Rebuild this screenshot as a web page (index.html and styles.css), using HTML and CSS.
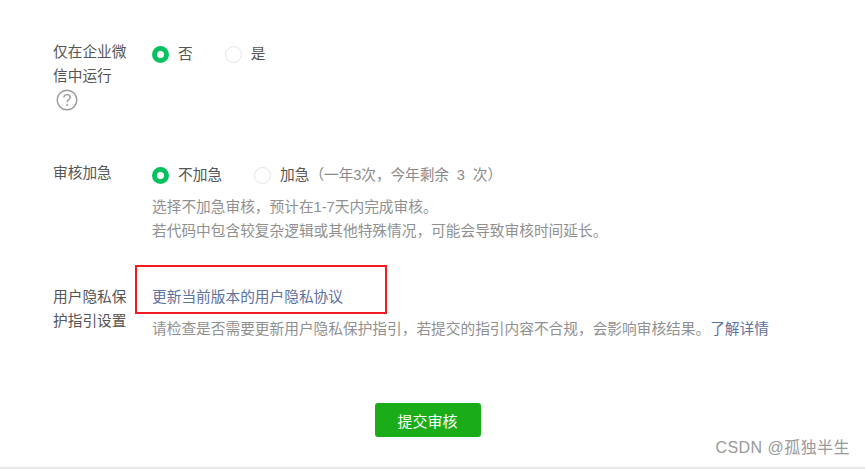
FILE: index.html
```html
<!DOCTYPE html>
<html lang="zh-CN">
<head>
    <meta charset="UTF-8">
    <meta name="viewport" content="width=device-width, initial-scale=1.0">
    <link rel="stylesheet" href="styles.css">
    <title>提交审核</title>
</head>
<body>
    <div class="page">
        <div class="form-row row-wecom">
            <div class="form-label">
                仅在企业微信中运行
                <svg class="help-icon" width="22" height="22" viewBox="0 0 22 22">
                    <circle cx="11" cy="11" r="9.8" fill="none" stroke="#9a9a9a" stroke-width="1.4"/>
                    <path d="M7.9 8.6c0-1.9 1.4-3 3.2-3s3.1 1.1 3.1 2.7c0 2.4-3.1 2.5-3.1 5" fill="none" stroke="#9a9a9a" stroke-width="1.4"/>
                    <circle cx="11.1" cy="16" r="0.95" fill="#9a9a9a"/>
                </svg>
            </div>
            <div class="form-value">
                <div class="radio-group">
                    <label class="radio radio-checked">否</label>
                    <label class="radio">是</label>
                </div>
            </div>
        </div>

        <div class="form-row row-speedup">
            <div class="form-label">审核加急</div>
            <div class="form-value">
                <div class="radio-group">
                    <label class="radio radio-checked">不加急</label>
                    <label class="radio">加急<span class="radio-note">（一年3次，今年剩余&nbsp;&nbsp;3&nbsp;&nbsp;次）</span></label>
                </div>
                <p class="form-tip tip-speedup">选择不加急审核，预计在1-7天内完成审核。<br>若代码中包含较复杂逻辑或其他特殊情况，可能会导致审核时间延长。</p>
            </div>
        </div>

        <div class="form-row row-privacy">
            <div class="form-label">用户隐私保护指引设置</div>
            <div class="form-value">
                <a class="link update-link" href="#">更新当前版本的用户隐私协议</a>
                <p class="form-tip">请检查是否需要更新用户隐私保护指引，若提交的指引内容不合规，会影响审核结果。<a class="link" href="#">了解详情</a></p>
            </div>
        </div>

        <div class="actions">
            <button class="submit-button">提交审核</button>
        </div>

        <div class="highlight-box"></div>
        <div class="watermark">CSDN @孤独半生</div>
    </div>
</body>
</html>
```

FILE: styles.css
```css
* {
    box-sizing: border-box;
}

html, body {
    margin: 0;
    padding: 0;
}

body {
    font-family: "Liberation Sans", "Noto Sans CJK SC", sans-serif;
    font-size: 14.7px;
    color: #555;
    background-color: #fff;
}

.page {
    position: relative;
    width: 865px;
    height: 469px;
    padding: 40px 0 0 53px;
    border-bottom: 2px solid #e7e7e7;
    overflow: hidden;
}

.form-row {
    display: flex;
}

.form-label {
    width: 99px;
    flex-shrink: 0;
    padding-right: 22px;
    line-height: 24px;
}

.help-icon {
    display: block;
    margin: 1px 0 0 3px;
}

.row-wecom {
    height: 121px;
}

.row-speedup {
    height: 119px;
}

.row-privacy {
    height: 123px;
    padding-top: 5px;
}

.radio-group {
    display: flex;
    line-height: 24px;
    margin-top: 2px;
}

.radio {
    display: flex;
    align-items: center;
    margin-right: 32px;
}

.radio::before {
    content: "";
    box-sizing: border-box;
    width: 17px;
    height: 17px;
    margin-right: 9px;
    border: 1px solid #e4e4e4;
    border-radius: 50%;
    background-color: #fff;
}

.radio-checked::before {
    border: 5.5px solid #07c160;
}

.radio-note {
    color: #8a8a8a;
    letter-spacing: -0.1px;
}

.form-tip {
    margin: 0;
    color: #909090;
    line-height: 24px;
}

.tip-speedup {
    margin-top: 8px;
}

.link {
    color: #5d71a0;
    text-decoration: none;
}

.update-link {
    display: block;
    line-height: 24px;
    margin-bottom: 8px;
}

.actions {
    display: flex;
    justify-content: center;
    padding-right: 63px;
}

.submit-button {
    width: 106px;
    height: 34px;
    border: none;
    border-radius: 3px;
    background-color: #1aad19;
    color: #fff;
    font-family: inherit;
    font-size: 15px;
}

.highlight-box {
    position: absolute;
    left: 135px;
    top: 265px;
    width: 252px;
    height: 49px;
    border: 2px solid #f01c22;
}

.watermark {
    position: absolute;
    right: 15px;
    bottom: 9px;
    font-size: 16px;
    letter-spacing: 0.45px;
    color: #999;
}
```
